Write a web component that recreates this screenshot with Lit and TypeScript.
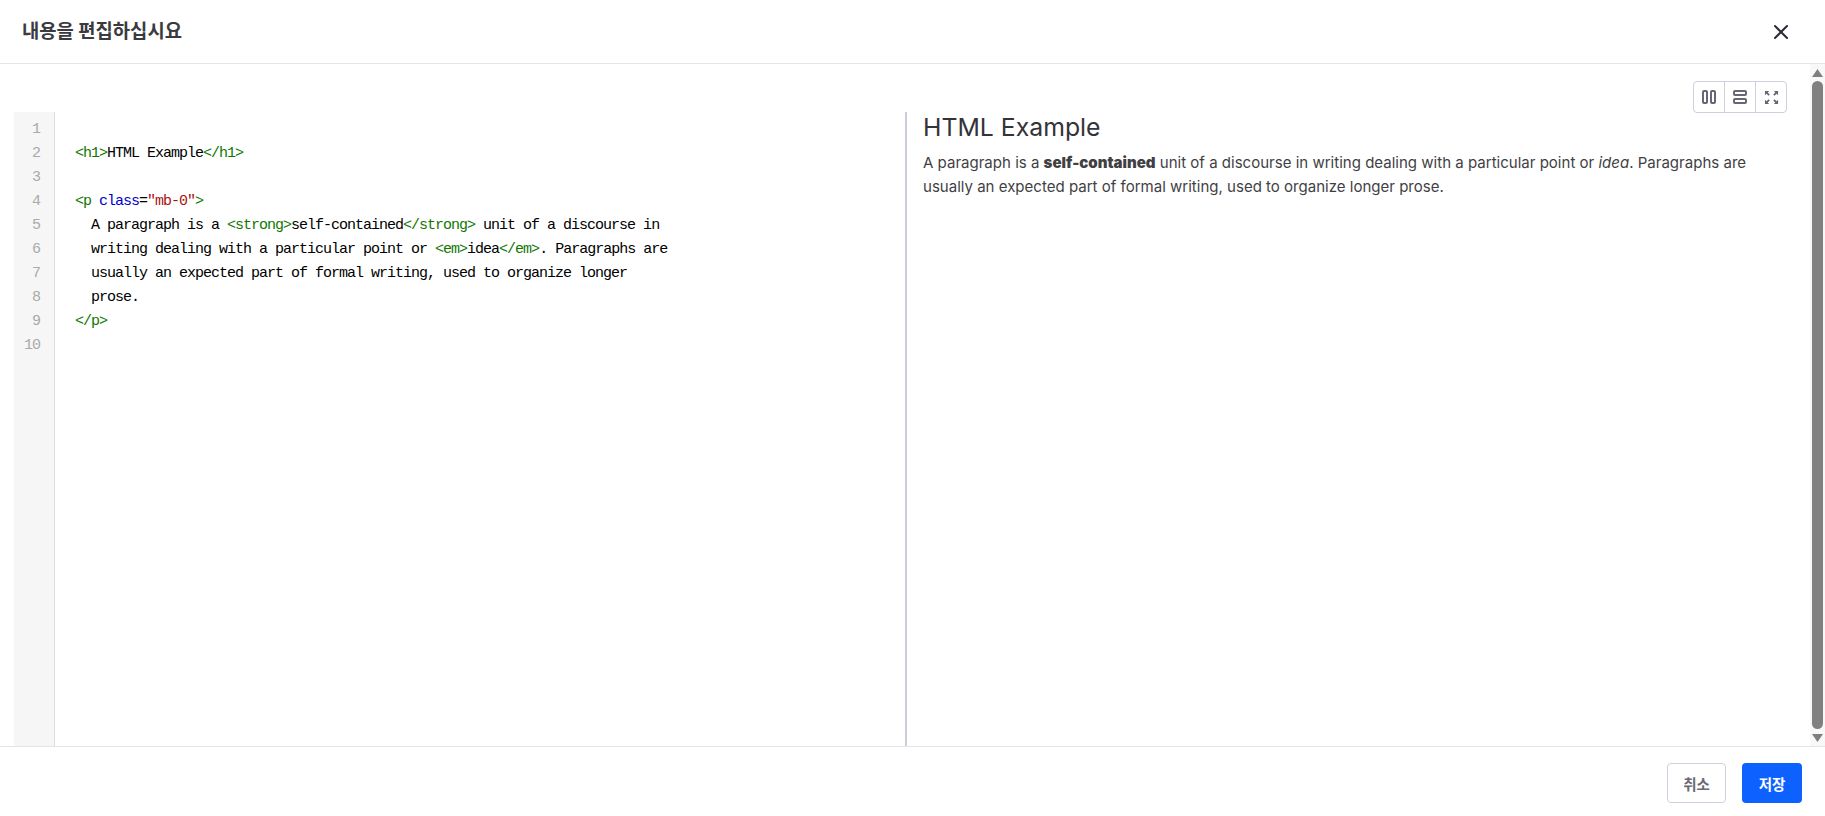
import { LitElement, html, css } from "lit";
import { customElement } from "lit/decorators.js";

const T = (s: string) => html`<span class="tag">${s}</span>`;

@customElement("app-root")
export class AppRoot extends LitElement {
  static styles = css`
    :host { display: block; height: 816px; width: 1825px; background: #fff; overflow: hidden; font-family: Inter, "Noto Sans CJK KR", sans-serif; color: #2f2f33; }
    .modal { height: 816px; display: flex; flex-direction: column; }
    header { height: 63px; flex: none; display: flex; align-items: center; justify-content: space-between; padding: 0 34px 0 22px; border-bottom: 1px solid #e4e4ea; }
    h5 { margin: 0; font-size: 18.8px; font-weight: 700; line-height: 24px; color: #3a3a3f; }
    .close { display: flex; width: 20px; height: 20px; border: 0; padding: 0; background: none; }
    .body { flex: none; height: 682px; display: flex; }
    .content { flex: 1; min-width: 0; display: flex; flex-direction: column; padding: 17px 23px 0 14px; }
    .tools { flex: none; height: 32px; display: flex; justify-content: flex-end; margin-bottom: -1px; }
    .group { display: flex; border: 1px solid #cfcfdd; border-radius: 4px; height: 32px; box-sizing: border-box; width: 94px; }
    .group button { flex: 1; border: 0; background: none; padding: 0; display: flex; align-items: center; justify-content: center; }
    .group button + button { border-left: 1px solid #cfcfdd; }
    .split { flex: 1; display: grid; grid-template-columns: 893px 1fr; min-height: 0; }
    .code { display: flex; min-height: 0; border-right: 2px solid #cdcddb; }
    .gutter { width: 40px; flex: none; background: #f6f6f6; border-right: 1px solid #dddddd; padding-top: 6px; }
    .ln { height: 24px; text-align: right; padding-right: 14px; color: #aaaaaa; font: 15px/24px "Liberation Mono", monospace; letter-spacing: -1px; }
    pre { margin: 6px 0 0 20px; font: 15px/24px "Liberation Mono", monospace; letter-spacing: -1px; color: #000; }
    .tag { color: #170; }
    .attr { color: #00c; }
    .str { color: #a11; }
    .preview { padding-left: 16px; min-width: 0; }
    h1 { margin: 0 0 9px; font-size: 24.8px; font-weight: 400; line-height: 30px; color: #333338; }
    p { margin: 0; font-size: 15.04px; line-height: 24px; color: #3f3f44; }
    p strong { font-weight: 900; }
    .bar { width: 15px; flex: none; background: #f8f8f8; display: flex; flex-direction: column; align-items: center; }
    .arrow { height: 17px; flex: none; display: flex; align-items: center; justify-content: center; }
    .track { flex: 1; width: 100%; padding: 0 2px; box-sizing: border-box; display: flex; }
    .thumb { flex: 1; background: #808080; border-radius: 6px; }
    footer { flex: 1; display: flex; justify-content: flex-end; align-items: flex-start; gap: 16px; padding: 16px 23px 0 0; border-top: 1px solid #e4e4ea; }
    .btn { height: 40px; box-sizing: border-box; border-radius: 4px; font: 700 14.500px "Inter", "Noto Sans CJK KR", sans-serif; padding: 0; }
    .cancel { width: 59px; background: #fff; border: 1px solid #cfcfdd; color: #6a6a72; }
    .save { width: 60px; background: #0d62ff; border: 0; color: #fff; }
  `;

  render() {
    const nums = [1, 2, 3, 4, 5, 6, 7, 8, 9, 10];
    return html`<div class="modal">
      <header>
        <h5>내용을 편집하십시요</h5>
        <button class="close" aria-label="close">
          <svg width="20" height="20" viewBox="0 0 20 20" fill="none" stroke="#2b2b33" stroke-width="2" stroke-linecap="round"><path d="M4 4l12 12M16 4L4 16"/></svg>
        </button>
      </header>
      <div class="body">
        <div class="content">
          <div class="tools">
            <div class="group">
              <button aria-label="columns"><svg width="14" height="14" viewBox="0 0 14 14" fill="none" stroke="#666678" stroke-width="2"><rect x="1" y="1" width="4" height="12" rx="1"/><rect x="9" y="1" width="4" height="12" rx="1"/></svg></button>
              <button aria-label="rows"><svg width="14" height="14" viewBox="0 0 14 14" fill="none" stroke="#666678" stroke-width="2"><rect x="1" y="1" width="12" height="4" rx="1"/><rect x="1" y="9" width="12" height="4" rx="1"/></svg></button>
              <button aria-label="fullscreen"><svg width="15" height="15" viewBox="0 0 16 16" fill="#666678"><path d="M1 1h4.500L4 2.600l2.200 2.200-1.400 1.400L2.600 4 1 5.500zM15 1v4.500L13.400 4l-2.200 2.200-1.400-1.400L12 2.600 10.500 1zM1 15v-4.500L2.600 12l2.200-2.200 1.400 1.400L4 13.400 5.500 15zM15 15h-4.500l1.500-1.600-2.200-2.200 1.400-1.400 2.200 2.200L15 10.500z"/></svg></button>
            </div>
          </div>
          <div class="split">
            <div class="code">
              <div class="gutter">${nums.map((n) => html`<div class="ln">${n}</div>`)}</div>
              <pre>

${T("<h1>")}HTML Example${T("</h1>")}

${T("<p")} <span class="attr">class</span>=<span class="str">"mb-0"</span>${T(">")}
  A paragraph is a ${T("<strong>")}self-contained${T("</strong>")} unit of a discourse in
  writing dealing with a particular point or ${T("<em>")}idea${T("</em>")}. Paragraphs are
  usually an expected part of formal writing, used to organize longer
  prose.
${T("</p>")}
</pre>
            </div>
            <div class="preview">
              <h1>HTML Example</h1>
              <p>A paragraph is a <strong>self-contained</strong> unit of a discourse in writing dealing with a particular point or <em>idea</em>. Paragraphs are usually an expected part of formal writing, used to organize longer prose.</p>
            </div>
          </div>
        </div>
        <div class="bar">
          <div class="arrow"><svg width="11" height="8" viewBox="0 0 11 8" fill="#7f7f7f"><path d="M5.500 0L11 8H0z"/></svg></div>
          <div class="track"><div class="thumb"></div></div>
          <div class="arrow"><svg width="11" height="8" viewBox="0 0 11 8" fill="#7f7f7f"><path d="M0 0h11L5.500 8z"/></svg></div>
        </div>
      </div>
      <footer>
        <button class="btn cancel">취소</button>
        <button class="btn save">저장</button>
      </footer>
    </div>`;
  }
}
